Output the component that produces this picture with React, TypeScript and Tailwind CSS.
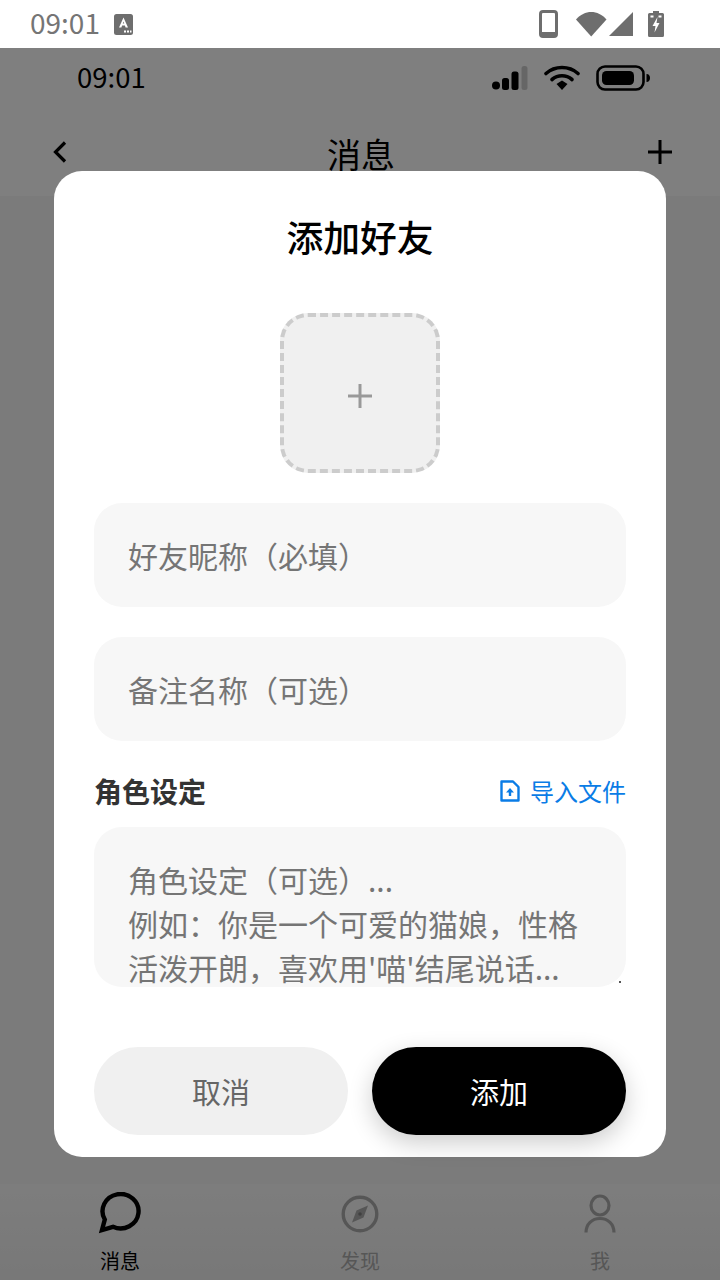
const font = "font-['Noto_Sans_CJK_SC','Noto_Sans',sans-serif]";

function SysIcons() {
  return (
    <div className="flex items-center">
      <svg width="20" height="28" viewBox="0 0 20 28" className="mr-[17px]">
        <rect x="1.5" y="1.5" width="16" height="25" rx="2.5" fill="none" stroke="#6e6e6e" strokeWidth="3" />
        <rect x="2" y="22" width="15" height="4" fill="#6e6e6e" />
      </svg>
      <svg width="32" height="26" viewBox="0 0 32 26">
        <path d="M0 8.5 C8.5 -1.5 22 -1.5 30.5 8.5 L15.2 25.5 Z" fill="#6e6e6e" />
      </svg>
      <svg width="26" height="26" viewBox="0 0 26 26" className="mr-[14px]">
        <path d="M25 1 V25 H1 Z" fill="#6e6e6e" />
      </svg>
      <svg width="16" height="26" viewBox="0 0 16 26">
        <path d="M5 0 H11 V2 H14.5 Q16 2 16 3.5 V24.5 Q16 26 14.5 26 H1.5 Q0 26 0 24.5 V3.5 Q0 2 1.5 2 H5 Z" fill="#6e6e6e" />
        <path d="M9.5 6 L4.5 15 H7.5 L6.5 21.5 L11.5 12 H8.5 Z" fill="#ffffff" />
        <rect x="2.5" y="4.5" width="3" height="2" fill="#ffffff" />
        <rect x="10.5" y="4.5" width="3" height="2" fill="#ffffff" />
      </svg>
    </div>
  );
}

function AppStatusIcons() {
  return (
    <div className="flex items-center">
      <svg width="36" height="26" viewBox="0 0 36 26" className="mr-[16px]">
        <circle cx="4" cy="20.5" r="4" fill="#000" />
        <rect x="10" y="13" width="7" height="12" rx="2.5" fill="#000" />
        <rect x="19.5" y="6.5" width="7" height="18.5" rx="2.5" fill="#000" />
        <rect x="29.5" y="1" width="6" height="24" rx="2.5" fill="#000" opacity="0.2" />
      </svg>
      <svg width="36" height="26" viewBox="0 0 36 26" className="mr-[16px]">
        <path d="M2 8.5 C11 0.5 25 0.5 34 8.5" fill="none" stroke="#000" strokeWidth="3.6" strokeLinecap="round" />
        <path d="M8 14.5 C14 9.5 22 9.5 28 14.5" fill="none" stroke="#000" strokeWidth="3.6" strokeLinecap="round" />
        <path d="M12.5 19 L18 15.5 L23.5 19 L18 25 Z" fill="#000" />
      </svg>
      <svg width="54" height="26" viewBox="0 0 54 26">
        <rect x="1.5" y="1.5" width="46" height="23" rx="7.5" fill="none" stroke="#000" strokeWidth="2.6" />
        <rect x="6" y="6" width="32" height="14" rx="4.5" fill="#000" />
        <path d="M50.5 9 C53 9 54 11 54 13 C54 15 53 17 50.5 17 Z" fill="#000" />
      </svg>
    </div>
  );
}

function NavChat() {
  return (
    <svg width="44" height="42" viewBox="0 0 44 42">
      <path
        d="M4 38 L6.8 27.5 A18 17.2 0 1 1 15 34.8 Z"
        fill="none"
        stroke="#000"
        strokeWidth="4.4"
      />
    </svg>
  );
}

function NavCompass() {
  return (
    <svg width="38" height="38" viewBox="0 0 38 38" className="mt-[3px]">
      <circle cx="19" cy="19" r="16.8" fill="none" stroke="#adadad" strokeWidth="3.4" />
      <path d="M27 10.5 L22.5 22.5 L11 27.5 L15.5 15.5 Z" fill="#adadad" />
      <circle cx="19" cy="19" r="1.8" fill="#808080" />
    </svg>
  );
}

function NavPerson() {
  return (
    <svg width="32" height="40" viewBox="0 0 32 40" className="mt-[2px]">
      <ellipse cx="16" cy="11.5" rx="9" ry="9.5" fill="none" stroke="#adadad" strokeWidth="3.2" />
      <path d="M2 38.5 C2 30 8 24.5 16 24.5 C24 24.5 30 30 30 38.5" fill="none" stroke="#adadad" strokeWidth="3.2" />
    </svg>
  );
}

function NavItem({ icon, label, active }: { icon: React.ReactNode; label: string; active?: boolean }) {
  return (
    <div className="flex w-[240px] flex-col items-center">
      <div className="flex h-[44px] items-start justify-center">{icon}</div>
      <span className={`mt-[10px] text-[20px] leading-[30px] ${active ? "text-black" : "text-[#adadad]"}`}>{label}</span>
    </div>
  );
}

export default function App() {
  const input =
    "block h-[104px] w-full rounded-[28px] bg-[#f7f7f7] px-[34px] text-[30px] text-black outline-none placeholder:text-[#757575]";
  return (
    <div className={`flex h-[1280px] w-[720px] flex-col overflow-hidden bg-white ${font}`}>
      <div className="flex h-[48px] shrink-0 items-center justify-between pl-[30px] pr-[56px]">
        <div className="flex items-center">
          <span className="pb-[4px] text-[28px] leading-none text-[#757575]">09:01</span>
          <svg width="19" height="21" viewBox="0 0 19 21" className="ml-[14px]">
            <rect x="0" y="0" width="19" height="21" rx="2.5" fill="#6e6e6e" />
            <path d="M5 13.5 L9.5 3.5 L14 13.5 H11.6 L10.9 11.5 H8.1 L7.4 13.5 Z M8.8 9.5 H10.2 L9.5 7.5 Z" fill="#fff" fillRule="evenodd" />
            <rect x="10" y="16.5" width="2" height="2" fill="#fff" />
            <rect x="13" y="16.5" width="2" height="2" fill="#fff" />
            <rect x="16" y="16.5" width="1.5" height="2" fill="#fff" />
          </svg>
        </div>
        <SysIcons />
      </div>

      <div className="relative flex min-h-0 flex-1 flex-col">
        <div className="flex h-[60px] shrink-0 items-center justify-between pl-[77px] pr-[70px]">
          <span className="pb-[2px] text-[27.5px] leading-none text-black">09:01</span>
          <AppStatusIcons />
        </div>
        <div className="flex h-[88px] shrink-0 items-center justify-between pl-[50px] pr-[48px]">
          <svg width="20" height="24" viewBox="0 0 20 24">
            <path d="M15 2.5 L5.5 12 L15 21.5" fill="none" stroke="#000" strokeWidth="3.2" />
          </svg>
          <span className="ml-[4px] mt-[4px] text-[34px] leading-none text-black">消息</span>
          <svg width="24" height="24" viewBox="0 0 24 24">
            <path d="M12 0 V24 M0 12 H24" fill="none" stroke="#000" strokeWidth="3" />
          </svg>
        </div>
        <div className="flex-1 bg-[#f6f6f6]" />
        <div className="flex h-[96px] shrink-0 bg-gradient-to-b from-[#fbfbfb] to-[#f0f0f0] pt-[8px]">
          <NavItem icon={<NavChat />} label="消息" active />
          <NavItem icon={<NavCompass />} label="发现" />
          <NavItem icon={<NavPerson />} label="我" />
        </div>

        <div className="absolute inset-0 flex flex-col items-center bg-black/50 pt-[123px]">
          <div className="flex h-[986px] w-[612px] flex-col rounded-[28px] bg-white px-[40px] pt-[40px]">
            <h2 className="text-center text-[36.8px] font-medium leading-[50px] text-black">添加好友</h2>
            <button className="mx-auto mt-[52px] flex h-[160px] w-[160px] shrink-0 items-center justify-center rounded-[28px] border-[4px] border-dashed border-[#cccccc] bg-[#f0f0f0] pt-[6px]">
              <svg width="24" height="24" viewBox="0 0 24 24">
                <path d="M12 0 V24 M0 12 H24" fill="none" stroke="#999999" strokeWidth="3" />
              </svg>
            </button>
            <input className={`mt-[30px] ${input}`} placeholder="好友昵称（必填）" readOnly />
            <input className={`mt-[30px] ${input}`} placeholder="备注名称（可选）" readOnly />
            <div className="mt-[22px] mb-[8px] flex h-[56px] items-center justify-between">
              <span className="text-[28px] font-bold text-[#333333]">角色设定</span>
              <div className="flex items-center text-[#0a7ce6]">
                <svg width="20" height="22" viewBox="0 0 20 22" className="mr-[10px]">
                  <path d="M1.5 1.5 H13 L18.5 7 V20.5 H1.5 Z" fill="none" stroke="currentColor" strokeWidth="2.4" strokeLinejoin="round" />
                  <path d="M10 8 L14 12.5 H11.2 V16 H8.8 V12.5 H6 Z" fill="currentColor" />
                </svg>
                <span className="text-[24px] leading-none">导入文件</span>
              </div>
            </div>
            <div className="relative shrink-0">
              <textarea
                readOnly
                className="block h-[160px] w-full resize-none rounded-[28px] bg-[#f7f7f7] px-[34px] pb-[30px] pt-[30px] text-[30px] leading-[44px] text-black outline-none placeholder:text-[#757575]"
                placeholder={"角色设定（可选）...\n例如：你是一个可爱的猫娘，性格活泼开朗，喜欢用'喵'结尾说话..."}
              />
              <span className="absolute bottom-[4px] right-[5px] h-[2px] w-[2px] bg-[#555555]" />
            </div>
            <div className="mt-[60px] flex gap-[24px]">
              <button className="flex h-[88px] flex-1 items-center justify-center rounded-full bg-[#f0f0f0] pt-[1px] text-[29px] text-[#666666]">取消</button>
              <button className="flex h-[88px] flex-1 items-center justify-center rounded-full bg-black pt-[1px] text-[29px] text-white shadow-[0_8px_24px_rgba(0,0,0,0.2)]">添加</button>
            </div>
          </div>
        </div>
      </div>
    </div>
  );
}
